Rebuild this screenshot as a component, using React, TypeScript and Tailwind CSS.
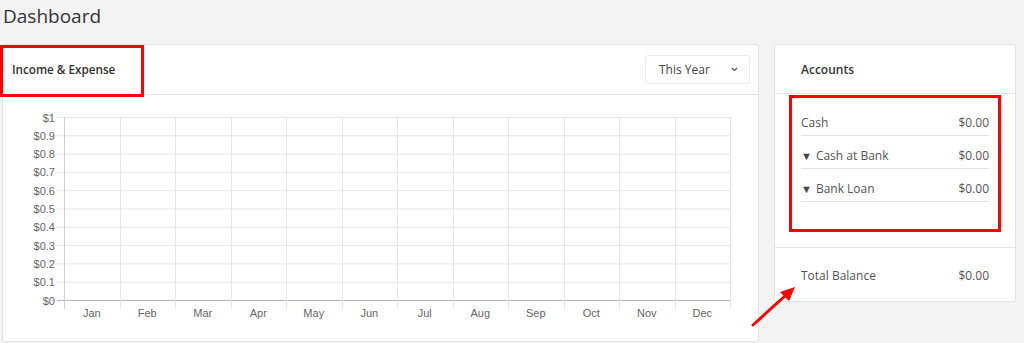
import React from "react";

const months = ["Jan", "Feb", "Mar", "Apr", "May", "Jun", "Jul", "Aug", "Sep", "Oct", "Nov", "Dec"];
const ticks = ["$1", "$0.9", "$0.8", "$0.7", "$0.6", "$0.5", "$0.4", "$0.3", "$0.2", "$0.1", "$0"];

const accounts = [
  { name: "Cash", amount: "$0.00", caret: false },
  { name: "Cash at Bank", amount: "$0.00", caret: true },
  { name: "Bank Loan", amount: "$0.00", caret: true },
];

// page coords shifted by card origin (x=3, y=95)
const ox = 3;
const oy = 95;
const top = 117 - oy;
const bottom = 300 - oy;
const left = 64 - ox;
const colW = 55.5;

const Chart = () => (
  <svg width="755" height="246" className="block" style={{ fontFamily: '"Liberation Sans", Arial, sans-serif' }}>
    {ticks.map((t, i) => {
      const y = top + (i * (bottom - top)) / 10 + 0.5;
      return (
        <g key={t}>
          <line x1={left - 7} x2={left + colW * 12} y1={y} y2={y} stroke={i === 10 ? "#b5b5b5" : "#e6e6e6"} />
          <text x={left - 9} y={y + 4} textAnchor="end" fontSize="11" fill="#666">
            {t}
          </text>
        </g>
      );
    })}
    {Array.from({ length: 13 }).map((_, j) => {
      const x = Math.round(left + j * colW) + 0.5;
      return <line key={j} x1={x} x2={x} y1={top} y2={bottom + 9} stroke={j === 0 ? "#cfcfcf" : "#e6e6e6"} />;
    })}
    {months.map((m, j) => (
      <text key={m} x={left + colW * (j + 0.5)} y={bottom + 17} textAnchor="middle" fontSize="11" fill="#666">
        {m}
      </text>
    ))}
  </svg>
);

export default function App() {
  return (
    <div
      className="relative w-[1024px] h-[343px] overflow-hidden bg-[#f3f3f3] text-[#555]"
      style={{ fontFamily: '"Open Sans", "Noto Sans", sans-serif' }}
    >
      <h1 className="pl-[3px] pt-[3px] h-[44px] text-[19px] leading-[26px] text-[#333]">Dashboard</h1>

      <div className="flex items-start">
        <div className="ml-[2px] w-[757px] h-[298px] bg-white border border-[#e3e3e3] rounded-[2px]">
          <div className="flex items-center justify-between h-[50px] border-b border-[#e6e6e6] pl-[9px] pr-[8px]">
            <span className="text-[11.7px] font-semibold text-[#333]">Income &amp; Expense</span>
            <div className="flex items-center justify-between w-[105px] h-[29px] border border-[#ececec] rounded-[3px] pl-[13px] pr-[11px] text-[12px] text-[#444]">
              <span>This Year</span>
              <svg width="7" height="5" viewBox="0 0 7 5">
                <path d="M1 1 L3.5 3.5 L6 1" fill="none" stroke="#555" strokeWidth="1.2" />
              </svg>
            </div>
          </div>
          <Chart />
        </div>

        <div className="ml-[15px] w-[242px] h-[258px] bg-white border border-[#e3e3e3] rounded-[2px] flex flex-col">
          <div className="h-[49px] flex items-center border-b border-[#e6e6e6] pl-[26px] pt-[2px]">
            <span className="text-[12px] font-semibold text-[#333]">Accounts</span>
          </div>
          <div className="h-[154px] border-b border-[#e6e6e6] pt-[9px] px-[26px]">
            {accounts.map((a) => (
              <div key={a.name} className="flex items-center justify-between h-[33px] pt-[7px] border-b border-[#e3e3e3] text-[12px]">
                <span className="flex items-center gap-[4px]">
                  {a.caret && <span className="text-[11px] leading-none text-[#444]">▼</span>}
                  {a.name}
                </span>
                <span>{a.amount}</span>
              </div>
            ))}
          </div>
          <div className="flex-1 flex items-center justify-between px-[26px] pt-[2px] text-[12px]">
            <span>Total Balance</span>
            <span>$0.00</span>
          </div>
        </div>
      </div>

      {/* annotations */}
      <div className="absolute left-0 top-[45px] w-[144px] h-[52px] border-[3px] border-[#ff0000]" />
      <div className="absolute left-[789px] top-[95px] w-[212px] h-[137px] border-[3px] border-[#ff0000]" />
      <svg className="absolute left-[748px] top-[282px]" width="52" height="48">
        <line x1="5" y1="43" x2="38" y2="13" stroke="#ff0000" strokeWidth="3" strokeLinecap="round" />
        <polygon points="47,5 32,10 41,19" fill="#ff0000" />
      </svg>
    </div>
  );
}
